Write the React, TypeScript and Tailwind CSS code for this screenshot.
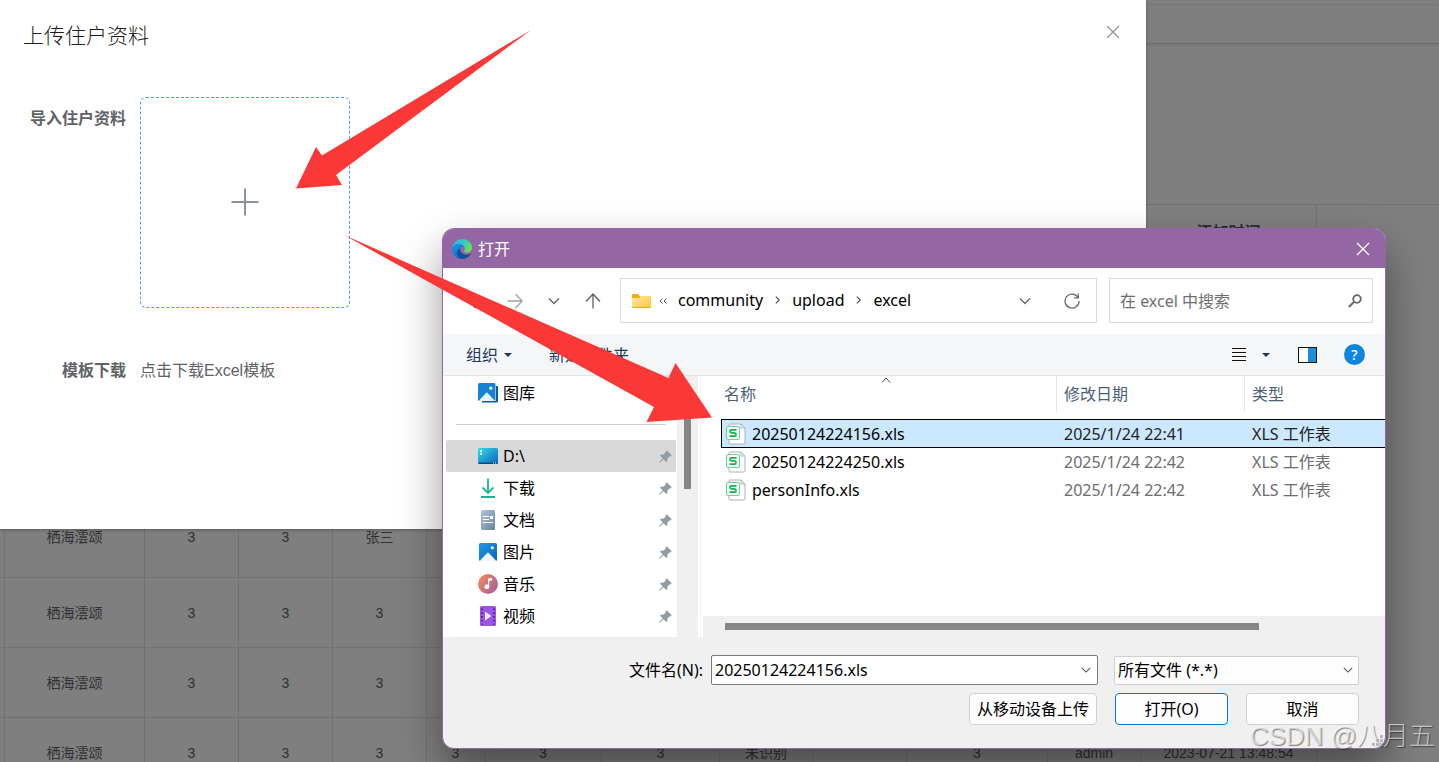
import { JSX, useState } from 'react';

interface FileRow {
	name: string;
	date: string;
	type: string;
}

const files: FileRow[] = [
	{ name: '20250124224156.xls', date: '2025/1/24 22:41', type: 'XLS 工作表' },
	{ name: '20250124224250.xls', date: '2025/1/24 22:42', type: 'XLS 工作表' },
	{ name: 'personInfo.xls', date: '2025/1/24 22:42', type: 'XLS 工作表' }
];

const estate = '栖海澐颂';
const blank = ['', '', '', '', '', '', '', ''];
const residents: string[][] = [
	['', estate, '3', '3', '张三', ...blank],
	['', estate, '3', '3', '3', ...blank],
	['', estate, '3', '3', '3', ...blank],
	['', estate, '3', '3', '3', '3', '3', '3', '未识别', '', '3', 'admin', '2023-07-21 13:48:54']
];

const residentCols = [
	{ title: '', width: 'w-[5px]' },
	{ title: '', width: 'w-[140px]' },
	{ title: '', width: 'w-[94px]' },
	{ title: '', width: 'w-[94px]' },
	{ title: '', width: 'w-[94px]' },
	{ title: '', width: 'w-[58px]' },
	{ title: '', width: 'w-[117px]' },
	{ title: '', width: 'w-[118px]' },
	{ title: '', width: 'w-[93px]' },
	{ title: '', width: 'w-[94px]' },
	{ title: '', width: 'w-[141px]' },
	{ title: '', width: 'w-[93px]' },
	{ title: '添加时间', width: 'w-[176px]' },
	{ title: '', width: '' }
];

/* ---------- icons ---------- */

function EdgeIcon() {
	return (
		<svg className="size-5" viewBox="0 0 20 20">
			<defs>
				<linearGradient id="edgeTop" x1="0" y1="0.2" x2="1" y2="0.6">
					<stop offset="0" stopColor="#2fb4e8" />
					<stop offset="0.5" stopColor="#36c7c9" />
					<stop offset="1" stopColor="#67e34f" />
				</linearGradient>
				<linearGradient id="edgeLeft" x1="0" y1="0" x2="0.6" y2="1">
					<stop offset="0" stopColor="#1a9ce6" />
					<stop offset="1" stopColor="#0b66c8" />
				</linearGradient>
			</defs>
			<path
				d="M0.4 8.8C1.2 3.6 5.4 0 10.3 0 16 0 20 4 20 8.500c0 3-2.100 5-5 5-2.400 0-3.400-.8-3-1.700.5-.8.8-1.500.8-2.400C12.600 7 10 5 6.800 5 3.800 5 1.400 6.700.4 8.800Z"
				fill="url(#edgeTop)"
			/>
			<path
				d="M0 10C0 7 3 5 6.600 5c3.200 0 5.600 1.700 6 4C11.600 7.600 10.200 7.500 9 8.400 6.500 10.300 7.200 15 10 17.600c1 1 2 1.700 3.200 2C6 21.600 0 16.500 0 10Z"
				fill="url(#edgeLeft)"
			/>
			<path
				d="M8.200 9.200C7.600 12 9.500 15 13 15.500c2.200.4 4.200-.2 5.400-.9.400-.2.700.1.500.500C17.300 18.100 13.900 20 10.300 20 6.200 18.800 4.600 15.500 5.200 13c.4-1.800 1.500-3 3-3.800Z"
				fill="#104e9c"
			/>
		</svg>
	);
}

function FolderIcon() {
	return (
		<svg className="w-[19px] h-4" viewBox="0 0 19 16">
			<defs>
				<linearGradient id="folder" x1="0" y1="0" x2="1" y2="1">
					<stop offset="0" stopColor="#ffe9a6" />
					<stop offset="1" stopColor="#fcc73c" />
				</linearGradient>
			</defs>
			<path d="M0 2a1 1 0 0 1 1-1h5l2 2h10v5H0Z" fill="#f3ae16" />
			<path d="M0 5h7l2-2h9a1 1 0 0 1 1 1v10a1 1 0 0 1-1 1H1a1 1 0 0 1-1-1Z" fill="url(#folder)" />
			<path d="M0.500 14.500h18" stroke="#e9a820" />
		</svg>
	);
}

function PinIcon() {
	return (
		<svg className="size-[13px]" viewBox="0 0 13 13">
			<path
				d="M7.700 0.300 12.700 5.300 11.600 6.400 10.800 6.200 8.600 8.400 8.300 11 7.300 12 4.500 9.200 1.200 12.500 0.200 12.600 0.400 11.700 3.700 8.400 1 5.600 2 4.700 4.600 4.400 6.800 2.200 6.600 1.400Z"
				fill="#929ca5"
			/>
		</svg>
	);
}

function GalleryIcon() {
	return (
		<svg className="size-5" viewBox="0 0 20 20">
			<path d="M4 18v1.500h14.500a1.500 1.500 0 0 0 1.500-1.500V3h-2v15Z" fill="#0c59a8" />
			<rect width="17.500" height="18" rx="1.500" fill="#1583d3" />
			<path d="M1 17.500 8 10q.8-.8 1.600 0l7 7.500q-.4.500-1 .5H2q-.6 0-1-.5Z" fill="#e6f3fc" />
			<circle cx="12.800" cy="5.200" r="1.600" fill="#fff" />
		</svg>
	);
}

function DriveIcon() {
	return (
		<svg className="size-5" viewBox="0 0 20 20">
			<defs>
				<linearGradient id="drive" x1="0" y1="0" x2="1" y2="1">
					<stop offset="0" stopColor="#34dbe4" />
					<stop offset="1" stopColor="#0c62bd" />
				</linearGradient>
			</defs>
			<rect y="2" width="20" height="16" rx="1.500" fill="url(#drive)" />
			<path d="M0.500 16.500h19v.5a1 1 0 0 1-1 1h-17a1 1 0 0 1-1-1Z" fill="#0a4a86" />
			<path d="M2 4h2v2H2zM2 7h2v2H2z" fill="#fff" />
			<path d="M15 17h1M17 17h1" stroke="#cfe6fa" />
		</svg>
	);
}

function DownloadIcon() {
	return (
		<svg className="size-5" viewBox="0 0 20 20" fill="none" stroke="#1fb58e" strokeWidth="1.800">
			<path d="M10 0.500v14.500M4.500 9.500 10 15l5.500-5.500M3 19h14" />
		</svg>
	);
}

function DocIcon() {
	return (
		<svg className="size-5" viewBox="0 0 20 20">
			<defs>
				<linearGradient id="docs" x1="0" y1="0" x2="1" y2="1">
					<stop offset="0" stopColor="#b4c6d8" />
					<stop offset="1" stopColor="#67829f" />
				</linearGradient>
			</defs>
			<rect x="3" width="14" height="20" rx="1.500" fill="url(#docs)" />
			<path d="M5 6.500h6M5 9.500h6M5 12.500h10M12.500 6.500h2v2h-2z" stroke="#fff" strokeWidth="1.200" fill="#fff" />
		</svg>
	);
}

function PictureIcon() {
	return (
		<svg className="size-5" viewBox="0 0 20 20">
			<defs>
				<linearGradient id="pics" x1="0" y1="0" x2="1" y2="1">
					<stop offset="0" stopColor="#1c9be6" />
					<stop offset="1" stopColor="#0c63bb" />
				</linearGradient>
			</defs>
			<rect x="1" y="1" width="18" height="18" rx="1.500" fill="url(#pics)" />
			<path d="M2 18.500 9.200 11q.8-.8 1.600 0l7.200 7.500q-.3.500-1 .5H3q-.7 0-1-.5Z" fill="#eef6fd" />
			<circle cx="14.300" cy="5.700" r="1.500" fill="#fff" />
		</svg>
	);
}

function MusicIcon() {
	return (
		<svg className="size-5" viewBox="0 0 20 20">
			<defs>
				<linearGradient id="music" x1="0" y1="0.200" x2="1" y2="0.900">
					<stop offset="0" stopColor="#ee8b54" />
					<stop offset="1" stopColor="#a65aa8" />
				</linearGradient>
			</defs>
			<circle cx="10" cy="10" r="10" fill="url(#music)" />
			<path d="M10 4.500 14 4v2.500l-2.800.5v5.800a2.300 2.300 0 1 1-1.200-2Z" fill="#fff" />
		</svg>
	);
}

function VideoIcon() {
	return (
		<svg className="size-5" viewBox="0 0 20 20">
			<rect x="2" width="16" height="20" rx="1.500" fill="#9a55e8" />
			<path d="M4 2.500v16M16 2.500v16" stroke="#4c1d86" strokeWidth="1.600" strokeDasharray="1.600 2.200" />
			<path d="M7 5.500v9l6.500-4.500Z" fill="#f3eafd" />
		</svg>
	);
}

function XlsIcon() {
	return (
		<svg className="w-5 h-[22px] shrink-0" viewBox="0 0 20 22" fill="none">
			<path d="M3 3V2a1 1 0 0 1 1-1h11l4 4v15a1 1 0 0 1-1 1H4a1 1 0 0 1-1-1v-3" fill="#fff" stroke="#aab2bd" />
			<path d="M15 1v4h4" stroke="#aab2bd" />
			<rect x="0.500" y="3.500" width="13" height="13" rx="1.500" fill="#effaf3" stroke="#6fcf97" />
			<path
				d="M10.500 6.800H5.500q-1.500 0-1.500 1.500t1.500 1.500h3q1.500 0 1.500 1.700t-1.500 1.700H3.500"
				stroke="#1fad58"
				strokeWidth="1.700"
			/>
		</svg>
	);
}

function Chevron({ className }: { className: string }) {
	return (
		<svg className={className} viewBox="0 0 12 8" fill="none" stroke="currentColor" strokeWidth="1.300">
			<path d="M1 1.500 6 6.500 11 1.500" />
		</svg>
	);
}

function Crumb() {
	return (
		<svg className="w-[5px] h-2" viewBox="0 0 5 8" fill="none" stroke="#555" strokeWidth="1.300">
			<path d="M0.800 0.600 4.200 4 0.800 7.400" />
		</svg>
	);
}

function Caret() {
	return (
		<svg className="w-2 h-1" viewBox="0 0 8 4" fill="#1e395b">
			<path d="M0 0h8L4 4Z" />
		</svg>
	);
}

const places = [
	{ name: 'D:\\', icon: <DriveIcon /> },
	{ name: '下载', icon: <DownloadIcon /> },
	{ name: '文档', icon: <DocIcon /> },
	{ name: '图片', icon: <PictureIcon /> },
	{ name: '音乐', icon: <MusicIcon /> },
	{ name: '视频', icon: <VideoIcon /> }
];

/* ---------- page behind the dialogs ---------- */

function ResidentsPage() {
	return (
		<main className="text-sm text-[#606266]">
			<div className="h-[5px] border-b border-gray-100"></div>
			<div className="h-[39px] border-b border-[#d8dce5] shadow-[0_1px_3px_rgba(0,0,0,0.12)]"></div>
			<table className="mt-40 w-full table-fixed border-separate border-spacing-0 border-t border-[#dfe6ec]">
				<thead>
					<tr>
						{residentCols.map((col, id) => (
							<th
								key={id}
								className={`${col.width} h-[303px] pt-4 align-top text-base text-[#515a6e] border-r last:border-r-0 border-[#dfe6ec] whitespace-nowrap overflow-hidden`}>
								{col.title}
							</th>
						))}
					</tr>
				</thead>
				<tbody>
					{residents.map((row, id) => (
						<tr key={id}>
							{row.map((cell, i) => (
								<td
									key={i}
									className={`h-[70px] p-0 text-center whitespace-nowrap border-r border-b border-[#dfe6ec] ${
										id === 0 ? 'pb-3' : ''
									}`}>
									{cell}
								</td>
							))}
							<td></td>
						</tr>
					))}
				</tbody>
			</table>
		</main>
	);
}

function UploadDialog() {
	return (
		<section
			role="dialog"
			aria-labelledby="upload-title"
			className="absolute top-0 left-0 right-[293px] pb-[146px] bg-white text-base text-[#606266] shadow-[0_1px_3px_rgba(0,0,0,0.3)]">
			<header className="flex items-start justify-between pt-5 pl-[23px] pr-[26px]">
				<h1 id="upload-title" className="text-[21px] leading-8 font-light text-[#1c1d20]">
					上传住户资料
				</h1>
				<button aria-label="关闭" className="mt-[5px] text-[#909399]">
					<svg className="size-3.5" viewBox="0 0 14 14" fill="none" stroke="currentColor" strokeWidth="1.200">
						<path d="M1 1 13 13M13 1 1 13" />
					</svg>
				</button>
			</header>
			<div className="mt-[45px] flex gap-3.5">
				<label htmlFor="upload" className="w-[126px] pt-2.5 text-right font-bold">
					导入住户资料
				</label>
				<button
					id="upload"
					className="flex items-center justify-center w-[210px] h-[211px] pb-0.5 rounded-md border border-dashed border-[#409eff]">
					<svg className="size-7" viewBox="0 0 28 28" stroke="#8c939d" strokeWidth="2">
						<path d="M14 0.500v27M0.500 14h27" />
					</svg>
				</button>
			</div>
			<div className="mt-[51px] flex gap-3.5">
				<span className="w-[126px] text-right font-bold">模板下载</span>
				<a href="#template">点击下载Excel模板</a>
			</div>
		</section>
	);
}

function AddressBar() {
	return (
		<div className="flex pt-2.5 pb-[11px] pl-[13px] pr-3 bg-white text-[#5f5f5f]">
			<button aria-label="后退" className="w-[39px] flex items-center justify-center">
				<svg className="size-4" viewBox="0 0 16 16" fill="none" stroke="currentColor" strokeWidth="1.300">
					<path d="M15.500 8H1M7.500 1 .8 8l6.700 7" />
				</svg>
			</button>
			<button aria-label="前进" className="w-[39px] flex items-center justify-center text-[#a0a0a0]">
				<svg className="size-4" viewBox="0 0 16 16" fill="none" stroke="currentColor" strokeWidth="1.300">
					<path d="M.5 8H15M8.500 1l6.700 7-6.700 7" />
				</svg>
			</button>
			<button aria-label="最近" className="w-[39px] flex items-center justify-center">
				<Chevron className="w-3 h-2" />
			</button>
			<button aria-label="上一级" className="w-[39px] flex items-center justify-center">
				<svg className="size-4" viewBox="0 0 16 16" fill="none" stroke="currentColor" strokeWidth="1.300">
					<path d="M8 15.500V1M1 8.500 8 1l7 7.500" />
				</svg>
			</button>
			<div className="ml-2 flex-1 flex items-center h-[45px] pl-[11px] pr-4 border border-[#d9d9d9] text-black">
				<FolderIcon />
				<svg className="mx-2 w-2 h-1.5" viewBox="0 0 8 6" fill="none" stroke="#555">
					<path d="M3.500 .5 1 3l2.500 2.500M7.500 .5 5 3l2.500 2.500" />
				</svg>
				<nav className="flex items-center gap-3 pb-0.5 pl-[3px]">
					<a href="#community">community</a>
					<Crumb />
					<a href="#upload">upload</a>
					<Crumb />
					<a href="#excel">excel</a>
				</nav>
				<button aria-label="以前的位置" className="ml-auto text-[#6a6a6a]">
					<Chevron className="w-3.5 h-2" />
				</button>
				<button aria-label="刷新" className="ml-8 text-[#6a6a6a]">
					<svg className="size-4" viewBox="0 0 16 16" fill="none" stroke="currentColor" strokeWidth="1.300">
						<path d="M14 4.500A7 7 0 1 0 15 8M14.300 .5v4.300H10" />
					</svg>
				</button>
			</div>
			<div className="ml-3 w-[264px] flex items-center pl-2.5 pr-2.5 border border-[#d9d9d9]">
				<input
					aria-label="搜索"
					placeholder="在 excel 中搜索"
					className="flex-1 min-w-0 outline-none placeholder:text-[#6f6f6f]"
				/>
				<svg className="size-3.5" viewBox="0 0 14 14" fill="none" stroke="#666">
					<circle cx="9" cy="5" r="3.800" strokeWidth="1.800" />
					<path d="M6.200 7.800.8 13" strokeWidth="2" />
				</svg>
			</div>
		</div>
	);
}

function Toolbar() {
	return (
		<div className="flex items-center h-[42px] pl-[23px] pr-5 bg-[#f4f6f8] border-b border-[#e5e5e5] text-[#1e395b]">
			<button className="flex items-center gap-1.5">
				组织
				<Caret />
			</button>
			<button className="ml-[37px]">新建文件夹</button>
			<button aria-label="视图" className="ml-auto flex items-center gap-4">
				<svg className="size-3.5" viewBox="0 0 14 14" stroke="#111">
					<path d="M0 .5h14M0 4.500h14M0 8.500h14M0 12.500h14" />
				</svg>
				<Caret />
			</button>
			<button aria-label="预览窗格" className="ml-7">
				<svg className="w-[19px] h-4" viewBox="0 0 19 16">
					<rect x="0.500" y="0.500" width="18" height="15" fill="#fff" stroke="#111" />
					<path d="M10 1h8v14h-8z" fill="#1a8fe0" />
				</svg>
			</button>
			<button
				aria-label="帮助"
				className="ml-[27px] size-[21px] rounded-full bg-[#0d86dc] text-white text-sm leading-5 font-medium">
				?
			</button>
		</div>
	);
}

function Sidebar() {
	return (
		<aside className="flex w-[258px] shrink-0 border-r border-gray-100 text-black">
			<div className="w-[234px] pl-[3px] pr-px pt-px">
				<button className="flex items-center gap-[5px] w-full h-8 pl-8">
					<GalleryIcon />
					图库
				</button>
				<hr className="mt-[15px] mb-[15px] ml-2.5 mr-2.5 border-[#d0d0d0]" />
				<ul>
					{places.map((place, id) => (
						<li key={place.name}>
							<button
								className={`flex items-center gap-[5px] w-full h-8 pl-8 pr-1 rounded-xs ${
									id === 0 ? 'bg-[#d9d9d9]' : ''
								}`}>
								{place.icon}
								<span className="flex-1 text-left">{place.name}</span>
								<PinIcon />
							</button>
						</li>
					))}
				</ul>
			</div>
			<div className="w-[21px] pt-4 bg-[#f0f0f0]">
				<div className="mx-auto w-[7px] h-[97px] bg-[#868686]"></div>
			</div>
		</aside>
	);
}

function FileList({ selected, onSelect }: { selected: string; onSelect: (name: string) => void }) {
	return (
		<div className="flex-1 min-w-0 flex flex-col pl-0.5">
			<table className="ml-[18px] table-fixed border-separate border-spacing-0 text-left text-[#6d6d6d]">
				<thead className="text-[#4c607a]">
					<tr>
						<th className="relative w-[336px] h-[43px] p-0 align-top font-normal">
							<div className="h-9 pl-[3px] leading-9 border-r border-[#e5e5e5]">名称</div>
							<svg
								className="absolute top-px left-40 w-2.5 h-1.5"
								viewBox="0 0 10 6"
								fill="none"
								stroke="#555">
								<path d="M1 5.500 5 1l4 4.500" />
							</svg>
						</th>
						<th className="w-[188px] p-0 align-top font-normal">
							<div className="h-9 pl-[7px] leading-9 border-r border-[#e5e5e5]">修改日期</div>
						</th>
						<th className="p-0 align-top font-normal">
							<div className="h-9 pl-[7px] leading-9">类型</div>
						</th>
					</tr>
				</thead>
				<tbody>
					{files.map((file) => {
						const active = file.name === selected;
						const cell = active ? 'h-[29px] border-y border-black bg-[#cce8ff] text-[#222]' : 'h-7';
						return (
							<tr key={file.name} onClick={() => onSelect(file.name)}>
								<td className={`p-0 ${cell} ${active ? 'border-l' : ''}`}>
									<div className={`flex items-center gap-1.5 text-black ${active ? 'pl-1' : 'pl-[5px]'}`}>
										<XlsIcon />
										{file.name}
									</div>
								</td>
								<td className={`p-0 pl-[7px] ${cell}`}>{file.date}</td>
								<td className={`p-0 pl-[7px] ${cell}`}>{file.type}</td>
							</tr>
						);
					})}
				</tbody>
			</table>
			<div className="mt-auto h-[21px] pt-[7px] pl-[22px] pr-[126px] bg-[#f0f0f0]">
				<div className="h-[7px] bg-[#868686]"></div>
			</div>
		</div>
	);
}

function OpenDialog() {
	const [selected, setSelected] = useState(files[0].name);

	return (
		<section
			role="dialog"
			aria-label="打开"
			className="absolute top-[228px] left-[442px] right-[53px] rounded-xl overflow-hidden border border-[#9466a4] bg-[#f0f0f0] text-base leading-6 font-['Noto_Sans','Noto_Sans_CJK_SC',sans-serif] shadow-[0_22px_44px_rgba(0,0,0,0.4)]">
			<header className="flex items-center h-[39px] pl-[9px] pr-[15px] bg-[#9466a4] text-white">
				<EdgeIcon />
				<h2 className="ml-1.5">打开</h2>
				<button aria-label="关闭" className="ml-auto">
					<svg className="size-3.5" viewBox="0 0 14 14" fill="none" stroke="currentColor" strokeWidth="1.300">
						<path d="M1 1 13 13M13 1 1 13" />
					</svg>
				</button>
			</header>
			<AddressBar />
			<Toolbar />
			<div className="flex h-[261px] bg-white">
				<Sidebar />
				<FileList selected={selected} onSelect={setSelected} />
			</div>
			<footer className="pt-[18px] pb-[23px] pr-[26px] text-black">
				<div className="flex items-center">
					<label htmlFor="file-name" className="flex-1 text-right whitespace-nowrap">
						文件名(N):
					</label>
					<div className="ml-2 w-[387px] flex items-center h-[30px] pl-[3px] pr-1.5 rounded-xs border border-[#7a7a7a] bg-white">
						<input
							id="file-name"
							value={selected}
							onChange={(e) => setSelected(e.target.value)}
							className="flex-1 min-w-0 outline-none"
						/>
						<button aria-label="历史记录">
							<Chevron className="w-2.5 h-2 text-[#555]" />
						</button>
					</div>
					<div className="relative ml-4 w-[245px]">
						<select
							aria-label="文件类型"
							className="w-full h-[29px] pl-[3px] appearance-none rounded-xs border border-[#cfcfcf] bg-[#fdfdfd]">
							<option>所有文件 (*.*)</option>
						</select>
						<Chevron className="absolute top-2.5 right-1.5 w-2.5 h-2 text-[#555]" />
					</div>
				</div>
				<div className="mt-2 flex justify-end gap-[18px]">
					<button className="w-32 h-8 rounded-sm border border-[#d0d0d0] bg-[#fdfdfd] whitespace-nowrap">
						从移动设备上传
					</button>
					<button className="w-[113px] h-8 rounded-sm border border-[#0078d4] bg-[#fdfdfd]">打开(O)</button>
					<button className="w-[113px] h-8 rounded-sm border border-[#d0d0d0] bg-[#fdfdfd]">取消</button>
				</div>
			</footer>
			{/* resize grip */}
			<svg className="absolute right-0.5 bottom-0.5 size-[11px]" viewBox="0 0 11 11" fill="#b8b8b8">
				<path d="M8 0h3v3H8zM4 4h3v3H4zM8 4h3v3H8zM0 8h3v3H0zM4 8h3v3H4zM8 8h3v3H8z" />
			</svg>
		</section>
	);
}

function App(): JSX.Element {
	return (
		<div className="relative h-screen overflow-hidden bg-white font-['Liberation_Sans','Noto_Sans_CJK_SC',sans-serif]">
			<ResidentsPage />
			<div className="absolute inset-0 bg-black/50"></div>
			<UploadDialog />
			<OpenDialog />
			{/* pointer arrows drawn over both dialogs */}
			<svg
				className="absolute top-0 left-0 w-[720px] h-[430px] pointer-events-none"
				viewBox="0 0 720 430"
				fill="#fb3838">
				<path d="M531 30 322 155.500 316 147 296 188.500 342 185 336 175Z" />
				<path d="M344 235 668.500 378 675.500 363 712 417.500 646.500 422 654 407Z" />
			</svg>
			<p className="absolute right-1 bottom-2 text-[26px] leading-9 font-light text-white/60 [text-shadow:1px_1px_1px_rgba(0,0,0,0.45)] pointer-events-none">
				CSDN @八月五
			</p>
		</div>
	);
}

export default App;
